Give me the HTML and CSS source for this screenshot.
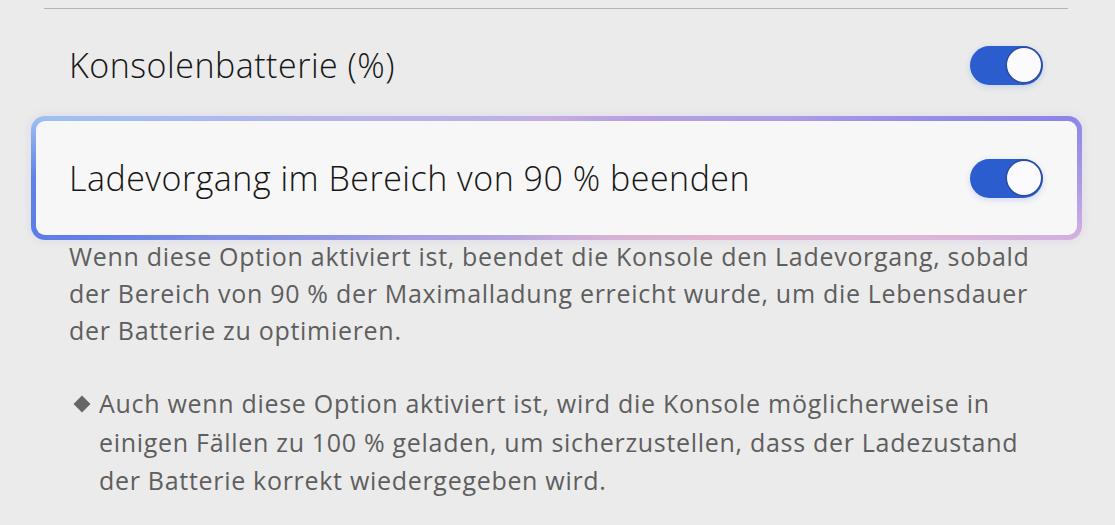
FILE: index.html
```html
<!DOCTYPE html>
<html lang="de">
<head>
<meta charset="utf-8">
<link rel="stylesheet" href="styles.css">
</head>
<body>
<div class="page">
  <div class="divider"></div>
  <div class="row row-first">
    <span class="label">Konsolenbatterie (%)</span>
    <span class="toggle"><span class="knob"></span></span>
  </div>
  <div class="card">
    <div class="row row-card">
      <span class="label">Ladevorgang im Bereich von 90 % beenden</span>
      <span class="toggle"><span class="knob"></span></span>
    </div>
  </div>
  <p class="desc">Wenn diese Option aktiviert ist, beendet die Konsole den Ladevorgang, sobald der Bereich von 90 % der Maximalladung erreicht wurde, um die Lebensdauer der Batterie zu optimieren.</p>
  <div class="note">
    <span class="bullet"><span class="diamond"></span></span>
    <p class="note-text">Auch wenn diese Option aktiviert ist, wird die Konsole möglicherweise in einigen Fällen zu 100 % geladen, um sicherzustellen, dass der Ladezustand der Batterie korrekt wiedergegeben wird.</p>
  </div>
</div>
</body>
</html>
```
FILE: styles.css
```css
html, body {
  margin: 0;
  padding: 0;
  background: #ebebeb;
  width: 1115px;
  height: 525px;
  overflow: hidden;
}
.page {
  font-family: "Open Sans", "Noto Sans", sans-serif;
  padding-top: 8px;
  display: flex;
  flex-direction: column;
}
.divider {
  height: 1px;
  background: #b4b4b4;
  margin: 0 47px 0 44px;
}
.row {
  display: flex;
  align-items: center;
  justify-content: space-between;
}
.row-first {
  height: 102px;
  padding: 5px 72px 0 69px;
}
.label {
  font-size: 34px;
  font-weight: 350;
  line-height: 46px;
  letter-spacing: 0.5px;
  color: #161616;
}
.card {
  margin: 0 33px 0 31px;
  height: 124px;
  box-sizing: border-box;
  border: 5px solid transparent;
  border-radius: 14px;
  background:
    linear-gradient(#f7f7f7, #f7f7f7) padding-box,
    conic-gradient(from 0deg at 50% 50%,
      #c6acdf 0deg, #b09ce4 75.7deg, #8c86ea 83.3deg, #a898e6 90deg,
      #d4b0e0 96.7deg, #deb4d8 98.9deg, #e2b4d0 107.7deg, #c8acdc 180deg,
      #a89ee2 248.3deg, #7e8ee6 260.1deg, #5c7ee6 263.3deg, #5e82e8 270deg,
      #9ec0f2 276.7deg, #a8bcf0 278.7deg, #b8b4ea 283.6deg, #c6acdf 360deg) border-box;
  box-shadow: 0 0 8px rgba(150, 150, 220, 0.22);
}
.row-card {
  height: 100%;
  padding: 0 34px 0 33px;
}
.toggle {
  width: 73px;
  height: 39px;
  border-radius: 20px;
  background: #2c5dcf;
  display: flex;
  align-items: center;
  justify-content: flex-end;
  padding-right: 2px;
  box-sizing: border-box;
  box-shadow: 0 2px 6px rgba(60, 110, 230, 0.22);
  flex-shrink: 0;
}
.knob {
  width: 34px;
  height: 34px;
  border-radius: 50%;
  background: #fbfbfd;
  box-shadow: 0 0 0 1.5px #2a4c9e;
}
.desc {
  margin: -2px 65px 0 69px;
  font-size: 25px;
  font-weight: 380;
  line-height: 37px;
  letter-spacing: 0.7px;
  color: #5e5e5e;
}
.note {
  display: flex;
  margin: 35px 75px 0 69px;
}
.bullet {
  width: 30px;
  height: 38px;
  flex-shrink: 0;
  display: flex;
  align-items: center;
  justify-content: center;
  padding-right: 5px;
  box-sizing: border-box;
}
.diamond {
  width: 12px;
  height: 12px;
  background: #666666;
  transform: rotate(45deg);
  margin-top: 2px;
}
.note-text {
  margin: 0;
  font-size: 25px;
  font-weight: 380;
  line-height: 38.5px;
  letter-spacing: 0.7px;
  color: #5e5e5e;
}
```
